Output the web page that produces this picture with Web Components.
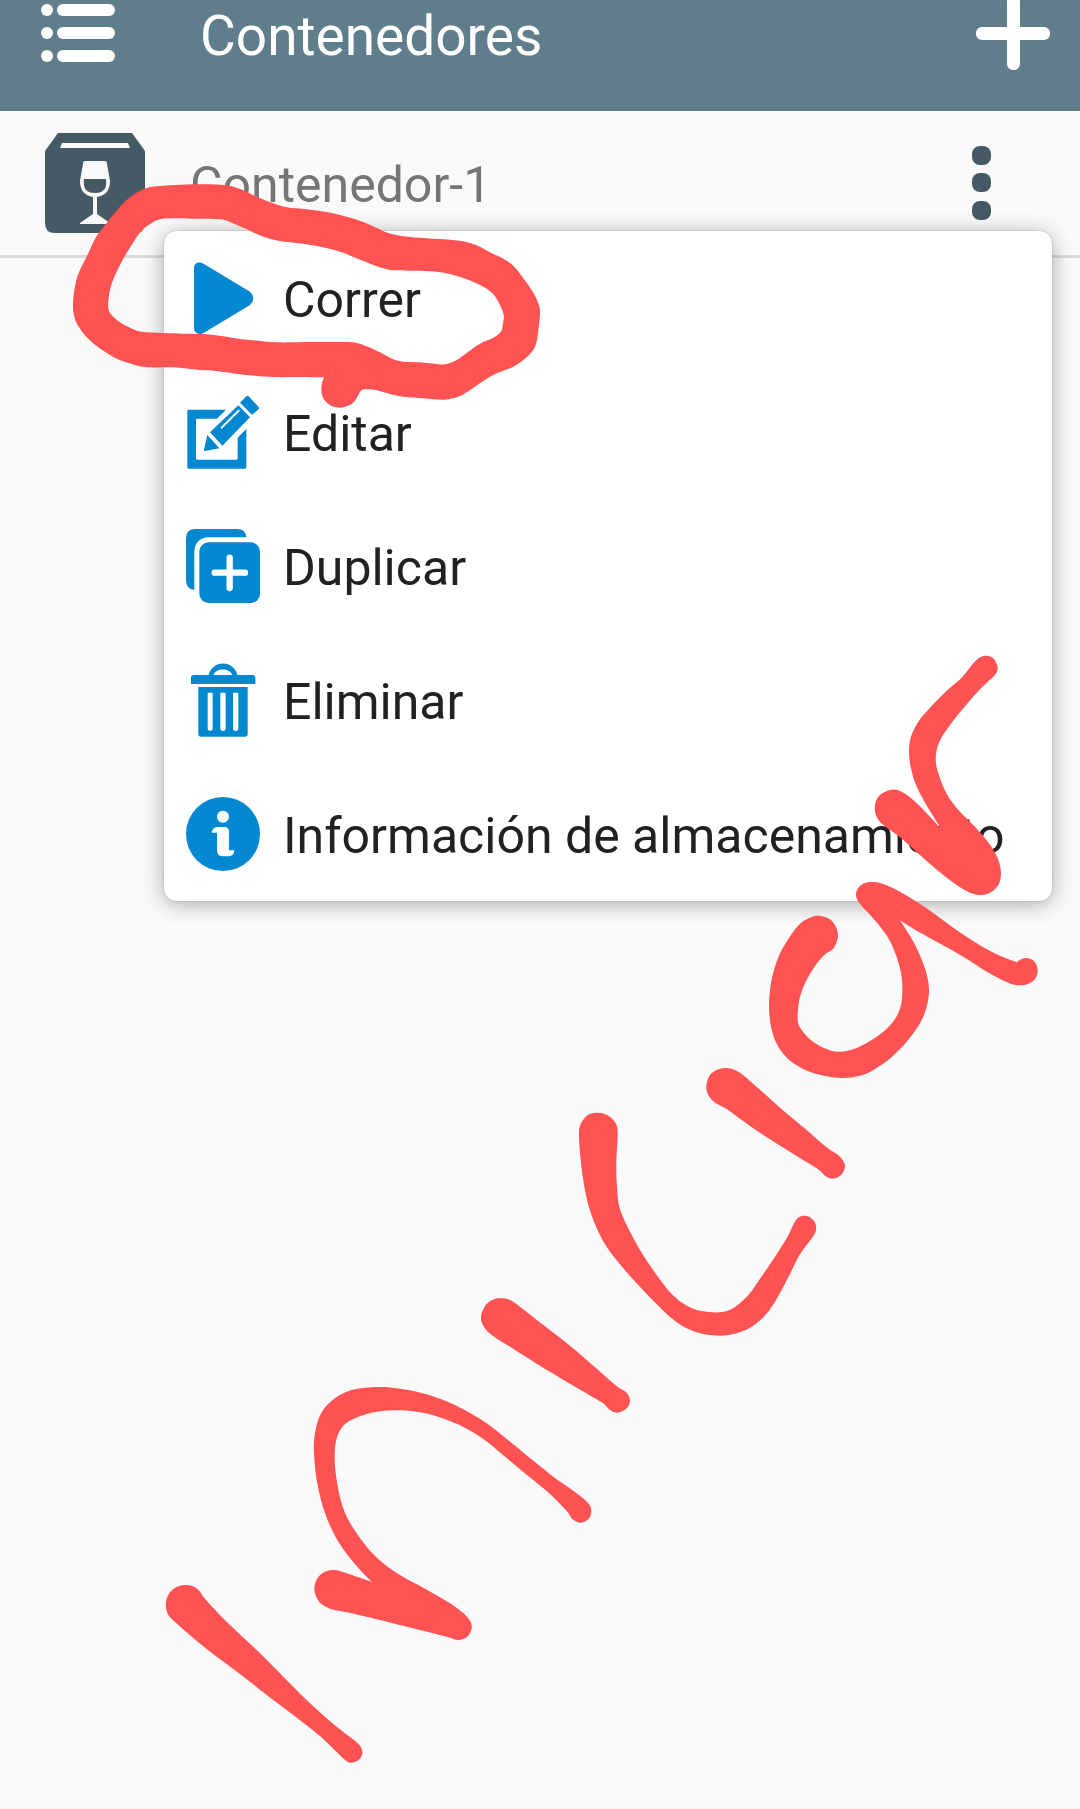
<!DOCTYPE html>
<html lang="es">
<head>
<meta charset="utf-8">
<meta name="viewport" content="width=device-width, initial-scale=1">
<title>Contenedores</title>
<style>
  html, body { margin: 0; }
  body { background: #fafafa; color: #212121; font-family: Roboto, "Noto Sans", sans-serif; }
</style>
</head>
<body>
<app-screen>
  <app-bar slot="bar">Contenedores</app-bar>
  <container-row>
    Contenedor-1
    <action-menu slot="menu">
      <menu-action icon="play">Correr</menu-action>
      <menu-action icon="edit">Editar</menu-action>
      <menu-action icon="copy">Duplicar</menu-action>
      <menu-action icon="trash">Eliminar</menu-action>
      <menu-action icon="info">Información de almacenamiento</menu-action>
    </action-menu>
  </container-row>
  <ink-layer slot="ink"></ink-layer>
</app-screen>
<script>
const RESET = `
  *, :host { box-sizing: border-box; }
  button { margin: 0; padding: 0; border: 0; background: none; color: inherit; font: inherit; text-align: left; cursor: pointer; }
  svg { display: block; flex: none; }`;

function define(name, markup, setup) {
  customElements.define(name, class extends HTMLElement {
    constructor() {
      super();
      const root = this.attachShadow({ mode: 'open' });
      const template = document.createElement('template');
      template.innerHTML = markup(this);
      root.append(template.content);
    }
    connectedCallback() { if (setup) setup(this, this.shadowRoot); }
  });
}

const ICONS = {
  play: `<path d="M24 22C24 4 40 0 54 9L192 92Q212 112 192 132L54 215C40 224 24 216 24 201Z"/>`,
  edit: `<path fill-rule="evenodd" d="M8 44H177q4 0 4 4V217q0 4-4 4H8q-4 0-4-4V48q0-4 4-4ZM34 71q-4 0-4 4V190q0 4 4 4H151q4 0 4-4V75q0-4-4-4Z"/>
    <path fill="#fff" d="M120 44L64 100 50 150 60 176 110 173 155 128 186 97 240 40 164 0Z"/>
    <path d="M182 3q3-2 6 1L218 36q2 4 0 7L198 59 162 23ZM157 31L192 67 109 152 72 112ZM64 120L100 160 57 168q-4 1-3-4Z"/>
    <path fill="none" stroke="#fff" stroke-width="6" stroke-linecap="round" d="M107 98L158 47"/>`,
  copy: `<path d="M28 0H153q26 0 28 25H68Q27 27 25 68V182Q0 180 0 152V28Q0 0 28 0Z"/>
    <rect x="40" y="40" width="182" height="182" rx="28"/>
    <path fill="none" stroke="#fff" stroke-width="19" stroke-linecap="round" d="M131 86V177M86 131H177"/>`,
  trash: `<path d="M15 63V44q0-8 8-8H68a44 44 0 0 1 86 0H200q8 0 8 8V63ZM82 36H139a30 24 0 0 0-57 0Z" fill-rule="evenodd"/>
    <path d="M37 72H185V213q0 8-8 8H45q-8 0-8-8Z"/>
    <path fill="#fff" d="M65 89h15V196a7 7 0 0 1-15 0ZM103 89h16V196a8 8 0 0 1-16 0ZM141 89h16V196a8 8 0 0 1-16 0Z"/>`,
  info: `<circle cx="111" cy="111" r="111"/>
    <g fill="#fff"><circle cx="111" cy="59" r="18"/>
    <path d="M77 107q1-15 18-17h20q14 0 14 14v56h16q-1 17-16 18h-17q-19 0-19-20v-51Z"/></g>`
};

define('app-screen', () => `
  <style>${RESET}
    :host { display: block; position: relative; min-height: 100vh; overflow: hidden; }
  </style>
  <slot name="bar"></slot>
  <main><slot></slot></main>
  <slot name="ink"></slot>`);

define('app-bar', () => `
  <style>${RESET}
    :host { display: block; }
    header { display: flex; align-items: flex-start; min-height: 111px; padding: 0 30px 0 41px; background: #607d8b; color: #fff; }
    h1 { flex: 1; margin: 0; padding-left: 85px; font-size: 55px; line-height: 73px; font-weight: 400; }
  </style>
  <header>
    <button type="button" aria-label="Menú">
      <svg width="74" height="70" viewBox="0 0 74 70" fill="#fff">
        <rect y="4" width="12" height="12" rx="6"/><rect x="16" y="4" width="58" height="12" rx="6"/>
        <rect y="27" width="12" height="12" rx="6"/><rect x="16" y="27" width="58" height="12" rx="6"/>
        <rect y="50" width="12" height="12" rx="6"/><rect x="16" y="50" width="58" height="12" rx="6"/>
      </svg>
    </button>
    <h1><slot></slot></h1>
    <button type="button" aria-label="Agregar">
      <svg width="74" height="70" viewBox="0 0 74 70" fill="#fff">
        <rect y="27" width="74" height="13" rx="6"/><rect x="31" y="-4" width="13" height="74" rx="6"/>
      </svg>
    </button>
  </header>`);

define('container-row', () => `
  <style>${RESET}
    :host { display: block; position: relative; }
    .row { display: flex; align-items: center; padding: 22px 88px 22px 45px; border-bottom: 3px solid #dadada; }
    .name { flex: 1; padding: 4px 0 0 45px; color: #757575; font-size: 50px; line-height: 60px; }
    .menu { position: absolute; top: 120px; left: 164px; right: 28px; }
  </style>
  <div class="row">
    <svg width="100" height="100" viewBox="0 0 100 100" aria-hidden="true">
      <path fill="#455a64" d="M13 0H87L100 18V90q0 10-10 10H10Q0 100 0 90V18Z"/>
      <path fill="#fafafa" d="M17 10H83L85 15H15Z"/>
      <path fill="#fafafa" fill-rule="evenodd" d="M40 28H60Q62 28 62 31L65 48Q65 62 52 64V81L65 90V91H35V90L48 81V64Q35 62 35 48L38 31Q38 28 40 28ZM39 46Q37 60 50 60Q63 60 61 46Z"/>
    </svg>
    <span class="name"><slot></slot></span>
    <button type="button" aria-label="Opciones">
      <svg width="20" height="74" viewBox="0 0 20 74" fill="#455a64">
        <rect width="19" height="19" rx="8"/><rect y="27" width="19" height="19" rx="8"/><rect y="55" width="19" height="19" rx="8"/>
      </svg>
    </button>
  </div>
  <div class="menu"><slot name="menu"></slot></div>`);

define('action-menu', () => `
  <style>${RESET}
    :host { display: flex; flex-direction: column; background: #fff; border-radius: 13px;
      box-shadow: 0 0 2px rgba(0,0,0,.22), 0 3px 22px rgba(0,0,0,.32); }
  </style>
  <slot></slot>`, host => host.setAttribute('role', 'menu'));

define('menu-action', host => `
  <style>${RESET}
    :host { display: block; }
    button { display: flex; align-items: center; width: 100%; height: 134px; padding: 0 22px; }
    span { padding: 4px 0 0 23px; font-size: 50px; line-height: 60px; white-space: nowrap; }
  </style>
  <button type="button" role="menuitem">
    <svg width="74" height="74" viewBox="0 0 222 222" fill="#0288d1" aria-hidden="true">${ICONS[host.getAttribute('icon')] || ''}</svg>
    <span><slot></slot></span>
  </button>`);

/* Freehand strokes: each has an origin and closed outlines in thirds of a pixel.
   A point followed by "!" is a sharp corner. */
const STROKES = [
  { at: [60, 170], outlines: [
    '330,46 400,43 490,45 540,57 590,80 640,100 680,112 740,118 800,126 860,140 910,156 950,174 985,189 1030,199 1100,205 1170,209 1215,215 1250,226 1290,247 1330,266 1360,287 1385,318 1418,365 1435,400 1440,430 1434,490 1425,530 1400,562 1360,590 1310,610 1270,633 1220,667 1190,682 1150,689 1090,685 1030,680 990,672 950,661 925,658 905,660 895,675 885,692 868,706 842,713 815,708 795,692 785,670 785,645 792,622! 720,621 640,621 550,614 500,607 460,602 420,600 340,592 270,592 235,588 190,574 155,558 110,528 75,496 50,460 40,425 40,385 48,335 60,300 85,250 105,207 130,172 155,140 190,100 220,74 260,54 290,49',
    '335,145 400,146 480,148 515,158 560,178 610,200 660,213 710,219 770,228 840,245 890,265 940,285 970,295 1000,301 1050,302 1110,304 1160,310 1220,328 1270,350 1300,373 1317,400 1331,435 1328,465 1323,485 1300,503 1260,521 1225,545 1190,570 1155,583 1130,582 1080,577 1030,575 1000,568 960,547 920,529 890,519 860,516 760,516 650,517 580,511 540,507 490,499 440,493 370,491 310,489 250,486 220,478 180,457 155,435 145,415 148,370 160,328 185,275 215,225 240,188 265,166 295,149'] },
  { at: [680, 640], outlines: [
    '915,47 940,55 953,83 945,105 920,128 890,158 850,205 815,248 785,292 770,330 768,370 780,415 805,470 840,515 870,545 905,583 935,622 955,660 963,700 955,735 932,757 905,765 870,758 830,735 775,693 720,645 660,592 625,566 600,546 586,520 586,490 600,465 630,450 660,453 700,480 750,530 788,573! 745,505 710,440 693,385 687,335 693,290 715,245 750,203 800,152 845,113 880,70 897,54'] },
  { at: [680, 860], outlines: [
    '577,66 610,72 665,98 740,145 820,203 890,250 950,283 1010,307! 1025,297 1045,295 1065,307 1073,332 1065,357 1045,371 1017,376 985,368 920,335 850,290 760,240 700,206 660,181! 690,228 715,275 738,335 747,390 740,440 720,490 680,545 635,591 590,624 545,646 490,654 440,649 385,634 330,602 295,560 275,510 267,445 272,375 285,320 305,270 340,215 365,187 395,171 420,168 450,178 470,205 473,235 460,266 435,283 405,318 375,370 358,420 353,480 365,510 395,542 430,563 470,575 515,569 560,549 610,515 645,477 663,435 667,380 660,325 638,260 612,215 575,170 540,132 528,105 536,82 553,70'] },
  { at: [680, 860], outlines: [
    '137,624 165,630 190,646 235,685 300,743 370,802 440,862 470,882 488,900 495,920 485,943 465,955 440,951 410,925 350,888 250,825 180,776 140,747 105,728 85,705 79,680 88,648 110,630'] },
  { at: [460, 1080], outlines: [
    '414,98 445,107 467,130 473,160 469,250 471,320 478,380 500,435 540,510 590,585 635,642 680,677 725,693 780,697 820,684 865,645 900,596 945,530 980,475 1003,428 1018,411 1040,408 1060,420 1068,440 1062,465 1020,523 985,592 945,665 910,712 870,743 825,761 780,767 730,762 680,745 635,715 580,662 510,588 450,515 415,455 388,385 372,315 362,240 357,160 364,128 385,104'] },
  { at: [460, 1080], outlines: [
    '122,655 150,660 180,680 250,735 330,797 400,857 470,918 500,938 510,962 500,985 474,998 450,990 425,967 350,923 240,857 150,800 95,765 70,737 63,710 75,678 97,660'] },
  { at: [280, 1280], outlines: [
    '300,321 345,324 410,335 480,356 550,388 620,430 680,477 750,534 820,590 885,636 925,670 934,695 925,718 900,728 877,717 860,693 810,642 740,584 670,526 610,477 540,436 460,406 400,394 345,391 280,397 225,415 190,437 170,475 164,530 170,600 188,680 220,745 270,812 320,858 375,894 430,923 500,964 545,995 570,1022 575,1045 562,1070 535,1080 500,1070 410,1048 300,1020 200,997 150,986 118,966 103,930 112,895 135,875 165,870 200,880 276,906! 230,858 175,785 135,700 112,610 102,520 105,460 122,402 155,362 200,335 250,324'] },
  { at: [140, 1540], outlines: [
    '135,135 162,140 180,155 200,182 260,245 360,340 430,410 510,490 590,560 650,607 667,632 660,656 635,668 612,657 550,597 490,548 400,480 300,402 200,327 105,246 82,218 78,185 90,157 110,141'] }
];

/* Closed Catmull-Rom curve through the points, written as cubic segments. */
function outlinePath([ox, oy], text) {
  const pts = text.split(' ').map(item => {
    const [x, y] = item.replace('!', '').split(',').map(Number);
    return { x: ox + x / 3, y: oy + y / 3, sharp: item.endsWith('!') };
  });
  const n = pts.length;
  const tangent = i => {
    const p = pts[i], a = pts[(i + n - 1) % n], b = pts[(i + 1) % n];
    return p.sharp ? [0, 0] : [(b.x - a.x) / 6, (b.y - a.y) / 6];
  };
  let d = `M${pts[0].x.toFixed(1)} ${pts[0].y.toFixed(1)}`;
  for (let i = 0; i < n; i++) {
    const j = (i + 1) % n, p = pts[i], q = pts[j], s = tangent(i), e = tangent(j);
    d += 'C' + [p.x + s[0], p.y + s[1], q.x - e[0], q.y - e[1], q.x, q.y].map(v => v.toFixed(1)).join(' ');
  }
  return d + 'Z';
}

define('ink-layer', () => `
  <style>${RESET}
    :host { display: block; position: absolute; top: 0; left: 0; width: 100%; pointer-events: none; }
    svg { width: 100%; height: auto; }
  </style>
  <svg viewBox="0 0 1080 1809" fill="#ff5252" fill-rule="evenodd" role="img" aria-label="Iniciar">
    ${STROKES.map(s => `<path d="${s.outlines.map(o => outlinePath(s.at, o)).join('')}"/>`).join('')}
  </svg>`);
</script>
</body>
</html>
